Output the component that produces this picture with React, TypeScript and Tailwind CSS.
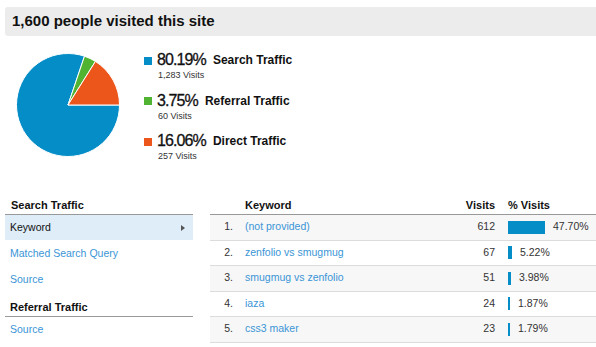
import { Fragment } from "react";

const slices = [
  { pct: 80.19, color: "#058dc7", label: "Search Traffic", visits: "1,283 Visits" },
  { pct: 3.75, color: "#50b432", label: "Referral Traffic", visits: "60 Visits" },
  { pct: 16.06, color: "#ed561b", label: "Direct Traffic", visits: "257 Visits" },
];

const rows = [
  { kw: "(not provided)", visits: 612, pct: 47.7 },
  { kw: "zenfolio vs smugmug", visits: 67, pct: 5.22 },
  { kw: "smugmug vs zenfolio", visits: 51, pct: 3.98 },
  { kw: "iaza", visits: 24, pct: 1.87 },
  { kw: "css3 maker", visits: 23, pct: 1.79 },
];

const Pie = () => {
  const cx = 52;
  const cy = 52;
  const r = 51.5;
  let start = 0;
  const pt = (deg: number) => {
    const a = (deg * Math.PI) / 180;
    return `${cx + r * Math.cos(a)} ${cy + r * Math.sin(a)}`;
  };
  return (
    <svg width="104" height="104" viewBox="0 0 104 104">
      {slices.map((s) => {
        const sweep = (s.pct / 100) * 360;
        const end = start + sweep;
        const d = `M ${cx} ${cy} L ${pt(start)} A ${r} ${r} 0 ${sweep > 180 ? 1 : 0} 1 ${pt(end)} Z`;
        start = end;
        return <path key={s.label} d={d} fill={s.color} stroke="#fff" strokeWidth="1" />;
      })}
    </svg>
  );
};

export default function App() {
  return (
    <div className="w-[596px] h-[347px] overflow-hidden bg-white text-[#222] font-['Liberation_Sans',Arial,sans-serif]">
      {/* title bar */}
      <div className="ml-[5px] mt-[7px] h-[29px] bg-[#ececec] rounded-l-[3px] flex items-center pl-[7px] text-[15px] font-bold text-[#111]">
        1,600 people visited this site
      </div>

      {/* pie + legend */}
      <div className="flex items-start mt-[15px]">
        <div className="ml-[16px] mt-[2px]">
          <Pie />
        </div>
        <div className="ml-[24px] flex flex-col gap-y-[10.5px]">
          {slices.map((s) => (
            <div key={s.label}>
              <div className="h-[18px] flex items-center">
                <span className="w-[8px] h-[8px] mr-[5px] mt-[1px]" style={{ backgroundColor: s.color }} />
                <span className="text-[16px] tracking-[-0.9px] text-[#111] leading-none [-webkit-text-stroke:0.3px_#111]">
                  {s.pct.toFixed(2)}%
                </span>
                <span className="ml-[7px] text-[12px] font-bold text-[#111] leading-none">{s.label}</span>
              </div>
              <div className="h-[12px] pl-[14px] text-[9px] text-[#333] leading-[12px]">{s.visits}</div>
            </div>
          ))}
        </div>
      </div>

      {/* bottom section */}
      <div className="flex mt-[35px]">
        {/* left nav */}
        <div className="ml-[5px] w-[188px] text-[10.5px]">
          <div className="h-[18px] flex items-center pl-[6px] text-[11px] font-bold text-[#111] border-b border-[#999]">
            Search Traffic
          </div>
          <div className="h-[25px] bg-[#deedf7] flex items-center justify-between pl-[5px] pr-[8px] text-[#111]">
            <span>Keyword</span>
            <span className="w-0 h-0 border-y-[3px] border-y-transparent border-l-[4px] border-l-[#555]" />
          </div>
          <div className="h-[26px] flex items-center pl-[5px] pt-[2px] text-[#3a95d6]">Matched Search Query</div>
          <div className="h-[25px] flex items-center pl-[5px] pt-[2px] text-[#3a95d6]">Source</div>
          <div className="h-[26px] flex items-end pb-[1px] pl-[5px] text-[11px] font-bold text-[#111] border-b border-[#999]">
            Referral Traffic
          </div>
          <div className="h-[26px] flex items-center pl-[5px] text-[#3a95d6]">Source</div>
        </div>

        {/* table */}
        <div className="ml-[17px] flex-1 text-[10.5px]">
          <div className="h-[18px] flex items-center font-bold text-[11px] text-[#111] border-b border-[#999]">
            <span className="w-[23px]" />
            <span className="flex-1 pl-[12px]">Keyword</span>
            <span className="w-[60px] pr-[13px] text-right">Visits</span>
            <span className="w-[88px]">% Visits</span>
          </div>
          {rows.map((r, i) => (
            <Fragment key={r.kw}>
              <div
                className={`h-[25.5px] flex items-center border-b border-[#dcdcdc] ${
                  i % 2 === 0 ? "bg-[#f7f7f7]" : "bg-white"
                }`}
              >
                <span className="w-[23px] text-right text-[#333]">{i + 1}.</span>
                <span className="flex-1 pl-[12px] text-[#3a95d6]">{r.kw}</span>
                <span className="w-[60px] pr-[13px] text-right text-[#333]">{r.visits}</span>
                <span className="w-[88px] flex items-center text-[#333]">
                  <span
                    className="h-[13px] bg-[#058dc7] mr-[8px]"
                    style={{ width: Math.max(2, Math.round(r.pct * 0.78)) }}
                  />
                  {r.pct.toFixed(2)}%
                </span>
              </div>
            </Fragment>
          ))}
        </div>
      </div>
    </div>
  );
}
